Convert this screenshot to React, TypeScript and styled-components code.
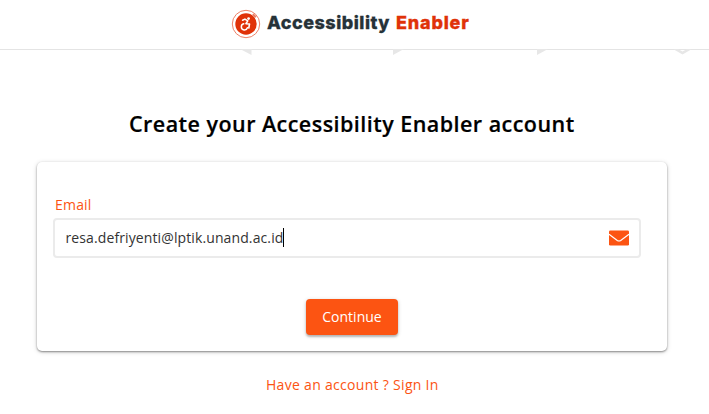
import React, { useState } from "react";
import styled, { createGlobalStyle } from "styled-components";

const GlobalStyle = createGlobalStyle`
  *, *::before, *::after { box-sizing: border-box; }
  body { margin: 0; background: #fff; font-family: "Open Sans", sans-serif; overflow: hidden; }
`;

const Page = styled.div`
  width: 709px;
  height: 414px;
  display: flex;
  flex-direction: column;
`;

const Header = styled.header`
  height: 50px;
  flex: none;
  display: flex;
  align-items: flex-start;
  padding: 9px 0 0 231px;
  border-bottom: 1px solid #e4e4e4;
`;

const Brand = styled.div`
  display: flex;
  gap: 6px;
`;

const BrandName = styled.div`
  display: flex;
  gap: 7px;
  font: 800 18px/28px Inter, sans-serif;
`;

const BrandWord = styled.span<{ $color: string; $spacing: number; $width: number }>`
  width: ${(p) => p.$width}px;
  white-space: nowrap;
  color: ${(p) => p.$color};
  letter-spacing: ${(p) => p.$spacing}px;
  -webkit-text-stroke: 0.3px ${(p) => p.$color};
`;

const Pattern = styled.svg`
  display: block;
  flex: none;
  margin-top: -1px;
`;

const Title = styled.h1`
  margin: 50px 0 0 129px;
  font: 600 21.5px/34px "Open Sans", sans-serif;
  letter-spacing: 0.46px;
  -webkit-text-stroke: 0.2px #000;
  color: #000;
  white-space: nowrap;
`;

const Card = styled.form`
  width: 630px;
  height: 189px;
  flex: none;
  margin: 21px 0 0 37px;
  padding: 32px 26px 0 16px;
  display: flex;
  flex-direction: column;
  border-radius: 5px;
  background: #fff;
  box-shadow: 0 1px 2px rgba(0, 0, 0, 0.4), 0 1px 5px rgba(0, 0, 0, 0.17);
`;

const Label = styled.label`
  height: 24px;
  padding-left: 2px;
  font-size: 14px;
  line-height: 22px;
  letter-spacing: 0.2px;
  color: #fc5412;
`;

const Field = styled.div`
  height: 40px;
  width: 588px;
  display: flex;
  align-items: center;
  justify-content: space-between;
  padding: 0 10px 0 10.5px;
  border: 2px solid #ebebeb;
  border-radius: 4px;
`;

const Value = styled.div`
  display: flex;
  align-items: center;
  font-size: 14px;
  line-height: 20px;
  letter-spacing: 0.11px;
  color: #333;
`;

const Caret = styled.span`
  width: 1px;
  height: 19px;
  margin-top: -1px;
  background: #000;
`;

const Continue = styled.button`
  width: 92px;
  height: 36px;
  margin: 41px 0 0 253px;
  padding: 0;
  border: 0;
  border-radius: 4px;
  background: #fc5412;
  color: #fff;
  font: 14px/36px "Open Sans", sans-serif;
  box-shadow: 0 2px 2px rgba(0, 0, 0, 0.2), 0 1px 4px rgba(0, 0, 0, 0.18);
`;

const SignIn = styled.a`
  margin: 23px 0 0 266px;
  font-size: 14px;
  line-height: 22px;
  letter-spacing: 0.3px;
  color: #fc5412;
  white-space: nowrap;
`;

const LogoMark = () => (
  <svg width="30" height="30" viewBox="0 0 30 30" fill="none">
    <circle cx="15" cy="15" r="13.7" stroke="#ee8268" strokeWidth="1" />
    <circle cx="15" cy="15" r="10.7" fill="#e03208" />
    <path d="M21.8 5.2l3 3" stroke="#e98068" strokeWidth="2.2" />
    <circle cx="17.6" cy="9.6" r="1.4" fill="#fff" />
    <path d="M11.6 11.2l2.3-1.1 2.9 1.8-1.9 2.8 3.6.3-.7 4" stroke="#fff" strokeWidth="1.6" strokeLinecap="round" strokeLinejoin="round" />
    <path d="M12.8 14.8a3.1 3.1 0 1 0 3.6 3.9" stroke="#fff" strokeWidth="1.5" strokeLinecap="round" />
  </svg>
);

const Envelope = () => (
  <svg width="20" height="16" viewBox="0 0 20 16">
    <rect y="0.5" width="20" height="15" rx="1.3" fill="#fc5412" />
    <path d="M0 4.2l8.3 6.2q1.7 1.2 3.4 0L20 4.2" fill="none" stroke="#fff" strokeWidth="1.2" />
  </svg>
);

export default function App() {
  const [email] = useState("resa.defriyenti@lptik.unand.ac.id");
  return (
    <>
      <GlobalStyle />
      <Page>
        <Header>
          <Brand>
            <LogoMark />
            <BrandName>
              <BrandWord $color="#263238" $spacing={0.5} $width={122}>Accessibility</BrandWord>
              <BrandWord $color="#e03208" $spacing={0.8} $width={74}>Enabler</BrandWord>
            </BrandName>
          </Brand>
        </Header>
        <Pattern width="709" height="8" viewBox="0 0 709 8">
          <g fill="#e7e7e7">
            <path d="M240 0h11.5v6z" />
            <path d="M393 0h11l-11 6z" />
            <path d="M537 0h11l-11 6z" />
            <path d="M673 0h5l4.5 2.5L687 0h5l-9.5 5.5z" />
          </g>
        </Pattern>
        <Title>Create your Accessibility Enabler account</Title>
        <Card>
          <Label>Email</Label>
          <Field>
            <Value>{email}<Caret /></Value>
            <Envelope />
          </Field>
          <Continue type="button">Continue</Continue>
        </Card>
        <SignIn>Have an account ? Sign In</SignIn>
      </Page>
    </>
  );
}
